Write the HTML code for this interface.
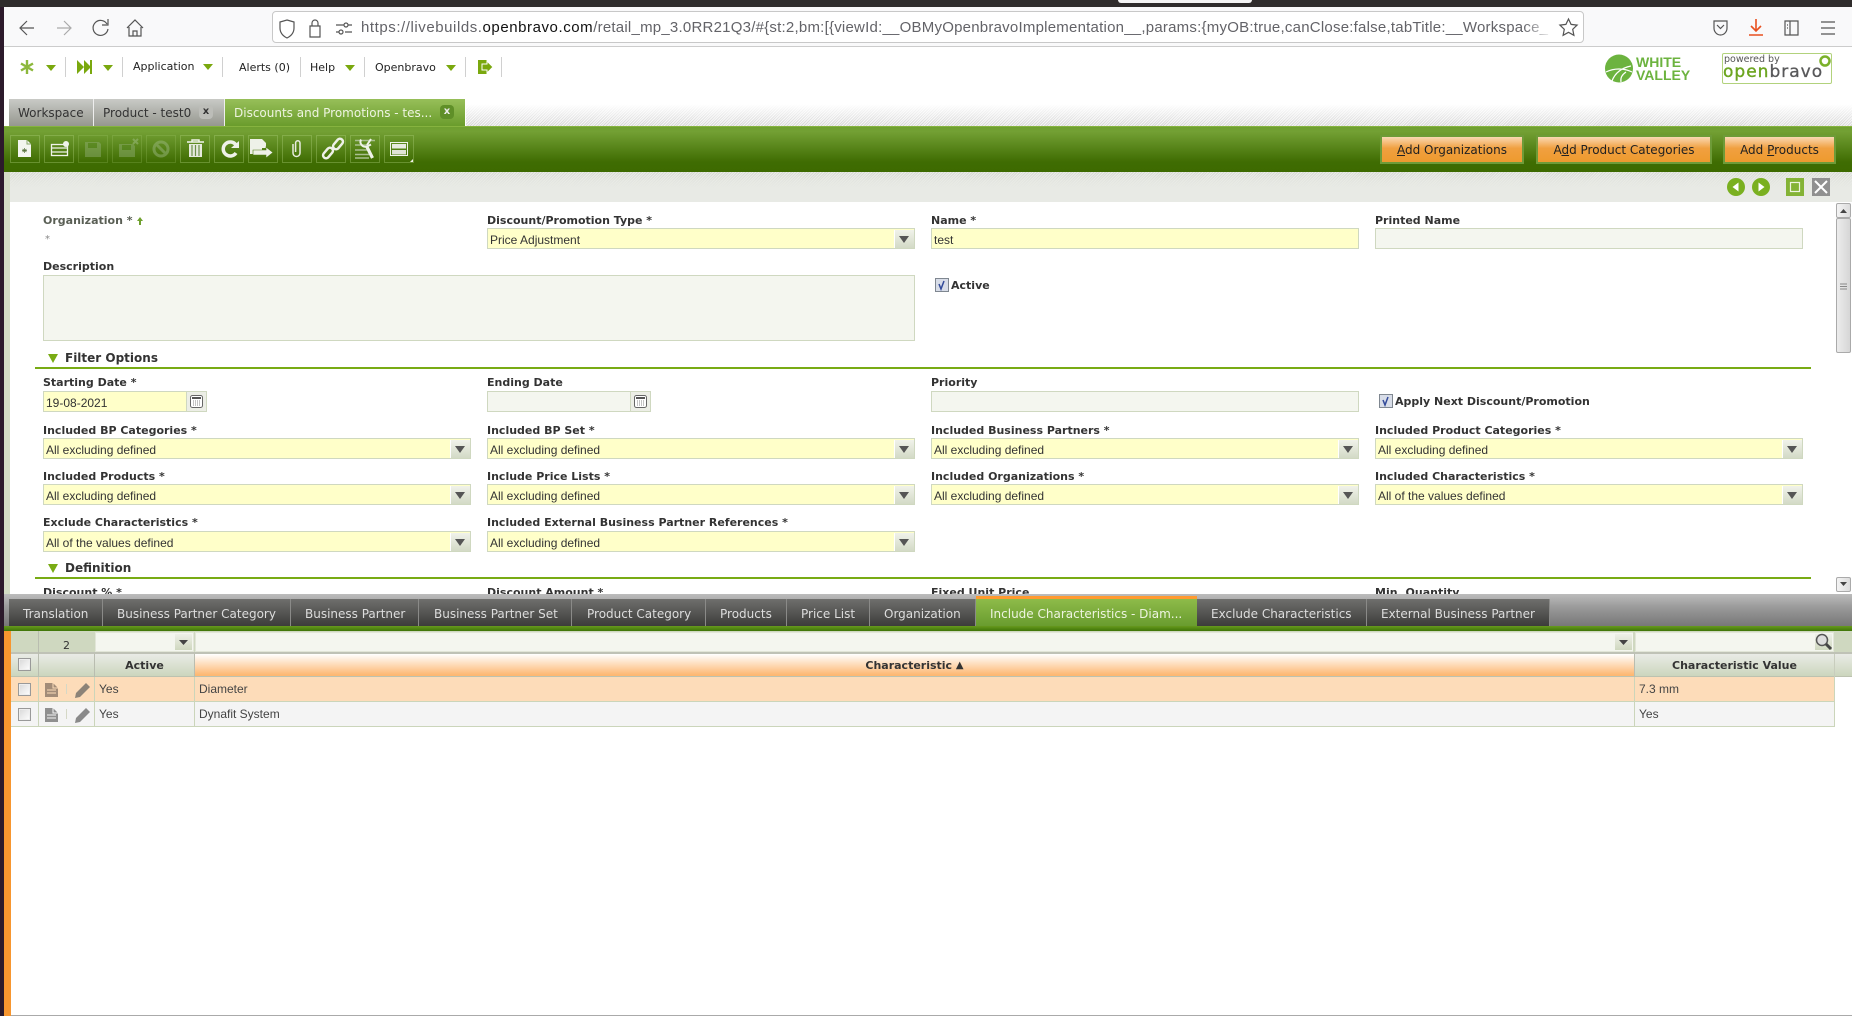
<!DOCTYPE html>
<html><head><meta charset="utf-8"><title>Openbravo</title>
<style>
html,body{margin:0;padding:0;background:#fff;width:1852px;height:1016px;overflow:hidden}
body{position:relative;font-family:"DejaVu Sans",sans-serif;color:#333}
div,span.a{position:absolute;box-sizing:border-box}
.t{white-space:nowrap}
.m{font:11px/14px "DejaVu Sans",sans-serif;color:#222;top:61px;white-space:nowrap}
.sep{top:57px;width:1px;height:20px;background:#d0d0d0}
.l{font:bold 11px/14px "DejaVu Sans",sans-serif;color:#333;white-space:nowrap;margin-top:1px}
.i{border:1px solid #cfd8c0;height:21px;font:12px/21px "Liberation Sans",sans-serif;color:#333;padding:1px 0 0 2px;white-space:nowrap}
.y{background:#ffffc9}.g{background:#f4f6ef}
.sb{right:0;top:1px;width:20px;height:18px;background:linear-gradient(#f0f2ea,#d3dac6);border-left:1px solid #fff}
.sb:after{content:"";position:absolute;left:4px;top:6px;border-left:5px solid transparent;border-right:5px solid transparent;border-top:7px solid #555}
.tt{top:99px;height:27px;font:12px/29px "DejaVu Sans",sans-serif;white-space:nowrap;background:linear-gradient(#c9cac6,#95978f);color:#333;border-right:1px solid #eee}
.st{top:599px;height:27px;font:12px/31px "DejaVu Sans",sans-serif;color:#ddd;white-space:nowrap;background:linear-gradient(#6f6f6d,#3c3c3a);border-right:1px solid #8a8a88}
.tb{top:135px;width:30px;height:28px;border:1px solid rgba(170,205,120,.38)}
.ob{top:135px;height:29px;border:2px solid #6e9b38;background:linear-gradient(#fbd9b3,#f0a040 45%,#ee9a2e);font:12px/27px "DejaVu Sans",sans-serif;color:#222;text-align:center;white-space:nowrap}
.c{font:12px/24px "Liberation Sans",sans-serif;color:#444;white-space:nowrap}
.h{font:bold 11px/24px "DejaVu Sans",sans-serif;color:#333;text-align:center;white-space:nowrap;top:654px;height:22px}
.cb{width:13px;height:13px;border:1px solid #999;background:linear-gradient(135deg,#d8d8d8,#fff);box-shadow:inset 0 0 0 1px #eee}
u{text-decoration:underline}
</style></head><body>
<!-- window chrome -->
<div style="left:0;top:0;width:1852px;height:7px;background:#2f2c2c"></div>
<div style="left:1118px;top:0;width:134px;height:3px;background:#f4f4f4;border-radius:0 0 3px 3px"></div>
<div style="left:4px;top:7px;width:1848px;height:40px;background:#f9f9fa;border-bottom:1px solid #ccc"></div>
<div style="left:272px;top:11px;width:1312px;height:32px;background:#fff;border:1px solid #c8c8c8;border-radius:4px"></div>
<div class="t" style="left:361px;top:18px;width:1192px;height:20px;overflow:hidden;font:15px/20px 'Liberation Sans',sans-serif;color:#636368;letter-spacing:.56px;-webkit-mask-image:linear-gradient(90deg,#000 97.500%,transparent)">https://livebuilds.<span style="color:#111">openbravo.com</span><span style="letter-spacing:.228px">/retail_mp_3.0RR21Q3/#{st:2,bm:[{viewId:__OBMyOpenbravoImplementation__,params:{myOB:true,canClose:false,tabTitle:__Workspace_</span></div>

<!-- app menu -->
<div class="m" style="left:133px;top:60px">Application</div>
<div class="m" style="left:239px">Alerts (0)</div>
<div class="m" style="left:310px">Help</div>
<div class="m" style="left:375px">Openbravo</div>
<div class="sep" style="left:65px"></div><div class="sep" style="left:122px"></div><div class="sep" style="left:222px"></div><div class="sep" style="left:300px"></div><div class="sep" style="left:364px"></div><div class="sep" style="left:465px"></div><div class="sep" style="left:501px"></div>

<!-- logos -->
<div class="t" style="left:1636px;top:54px;font:bold 14px/17px 'Liberation Sans',sans-serif;color:#6cb33f;">WHITE</div>
<div class="t" style="left:1636px;top:67px;font:bold 14px/17px 'Liberation Sans',sans-serif;color:#6cb33f;">VALLEY</div>
<div style="left:1722px;top:53px;width:110px;height:31px;border:1px solid #b2d27c;border-radius:2px;background:#fff"></div>
<div class="t" style="left:1724px;top:54px;font:9.5px/12px 'DejaVu Sans',sans-serif;color:#555">powered by</div>
<div class="t" style="left:1723px;top:60px;font:17px/24px 'DejaVu Sans',sans-serif;color:#6ca520;letter-spacing:1px;-webkit-text-stroke:.4px #6ca520">open<span style="color:#58585a;-webkit-text-stroke:.3px #58585a">bravo</span></div>

<!-- main tabs -->
<div style="left:466px;top:104px;width:1386px;height:22px;background:repeating-linear-gradient(135deg,#d6d6d6 0 1px,#f4f4f4 1px 2px);-webkit-mask-image:linear-gradient(transparent,#000)"></div>
<div class="tt" style="left:9px;width:85px;padding-left:9px">Workspace</div>
<div class="tt" style="left:94px;width:131px;padding-left:9px">Product - test0</div>
<div class="tt" style="left:225px;width:240px;padding-left:9px;background:linear-gradient(#97bf59,#6a9c2c);color:#eef4e0;border:0">Discounts and Promotions - tes...</div>
<div style="left:199px;top:105px;width:14px;height:14px;border-radius:4px;background:#bcbdb8;font:bold 10px/13px 'DejaVu Sans',sans-serif;color:#333;text-align:center">x</div>
<div style="left:440px;top:105px;width:14px;height:14px;border-radius:4px;background:#5f8f28;font:bold 10px/13px 'DejaVu Sans',sans-serif;color:#eee;text-align:center">x</div>

<!-- toolbar -->
<div style="left:4px;top:126px;width:1848px;height:46px;background:linear-gradient(#6e9f30 0,#73a034 10%,#3f6c02 78%,#3d6a00);border-top:1px solid #86b33f"></div>
<div class="tb" style="left:10px"></div><div class="tb" style="left:44px"></div><div class="tb" style="left:78px;opacity:.6"></div><div class="tb" style="left:112px;opacity:.6"></div><div class="tb" style="left:146px;opacity:.6"></div><div class="tb" style="left:180px"></div><div class="tb" style="left:214px"></div><div class="tb" style="left:248px"></div><div class="tb" style="left:282px"></div><div class="tb" style="left:316px"></div><div class="tb" style="left:350px"></div><div class="tb" style="left:384px"></div>
<div class="ob" style="left:1380px;width:144px"><u>A</u>dd Organizations</div>
<div class="ob" style="left:1536px;width:176px">A<u>d</u>d Product Categories</div>
<div class="ob" style="left:1723px;width:113px">Add <u>P</u>roducts</div>

<!-- form area -->
<div style="left:4px;top:172px;width:6px;height:422px;background:#d3dcc4"></div>
<div style="left:10px;top:172px;width:1842px;height:30px;background:linear-gradient(rgba(232,234,229,0),#e8eae5 60%),repeating-linear-gradient(135deg,#d2d4ce 0 1px,#eceee9 1px 2px)"></div>
<div style="left:10px;top:172px;width:1842px;height:30px;background:linear-gradient(rgba(232,234,229,.1),#e8eae5 70%)"></div>

<div class="l" style="left:43px;top:213px;color:#5a5f55">Organization *</div>
<div class="t" style="left:45px;top:233px;font:10px/14px 'DejaVu Sans',sans-serif;color:#888">*</div>
<div class="l" style="left:487px;top:213px">Discount/Promotion Type *</div>
<div class="i y" style="left:487px;top:228px;width:428px">Price Adjustment<div class="sb"></div></div>
<div class="l" style="left:931px;top:213px">Name *</div>
<div class="i y" style="left:931px;top:228px;width:428px">test</div>
<div class="l" style="left:1375px;top:213px">Printed Name</div>
<div class="i g" style="left:1375px;top:228px;width:428px"></div>
<div class="l" style="left:43px;top:259px">Description</div>
<div class="i g" style="left:43px;top:275px;width:872px;height:66px"></div>
<div class="l" style="left:951px;top:278px">Active</div>
<div class="l" style="left:65px;top:349px;font-size:12px;line-height:16px">Filter Options</div>
<div style="left:35px;top:367px;width:1776px;height:2px;background:#78ab14"></div>

<div class="l" style="left:43px;top:375px">Starting Date *</div>
<div class="i y" style="left:43px;top:391px;width:144px">19-08-2021</div>
<div class="i" style="left:186px;top:391px;width:21px;background:#eceee6"></div>
<div class="l" style="left:487px;top:375px">Ending Date</div>
<div class="i g" style="left:487px;top:391px;width:144px"></div>
<div class="i" style="left:630px;top:391px;width:21px;background:#eceee6"></div>
<div class="l" style="left:931px;top:375px">Priority</div>
<div class="i g" style="left:931px;top:391px;width:428px"></div>
<div class="l" style="left:1395px;top:394px">Apply Next Discount/Promotion</div>

<div class="l" style="left:43px;top:423px">Included BP Categories *</div>
<div class="i y" style="left:43px;top:438px;width:428px">All excluding defined<div class="sb"></div></div>
<div class="l" style="left:487px;top:423px">Included BP Set *</div>
<div class="i y" style="left:487px;top:438px;width:428px">All excluding defined<div class="sb"></div></div>
<div class="l" style="left:931px;top:423px">Included Business Partners *</div>
<div class="i y" style="left:931px;top:438px;width:428px">All excluding defined<div class="sb"></div></div>
<div class="l" style="left:1375px;top:423px">Included Product Categories *</div>
<div class="i y" style="left:1375px;top:438px;width:428px">All excluding defined<div class="sb"></div></div>

<div class="l" style="left:43px;top:469px">Included Products *</div>
<div class="i y" style="left:43px;top:484px;width:428px">All excluding defined<div class="sb"></div></div>
<div class="l" style="left:487px;top:469px">Include Price Lists *</div>
<div class="i y" style="left:487px;top:484px;width:428px">All excluding defined<div class="sb"></div></div>
<div class="l" style="left:931px;top:469px">Included Organizations *</div>
<div class="i y" style="left:931px;top:484px;width:428px">All excluding defined<div class="sb"></div></div>
<div class="l" style="left:1375px;top:469px">Included Characteristics *</div>
<div class="i y" style="left:1375px;top:484px;width:428px">All of the values defined<div class="sb"></div></div>

<div class="l" style="left:43px;top:515px">Exclude Characteristics *</div>
<div class="i y" style="left:43px;top:530.500px;width:428px">All of the values defined<div class="sb"></div></div>
<div class="l" style="left:487px;top:515px">Included External Business Partner References *</div>
<div class="i y" style="left:487px;top:530.500px;width:428px">All excluding defined<div class="sb"></div></div>
<div class="l" style="left:65px;top:559px;font-size:12px;line-height:16px">Definition</div>
<div style="left:35px;top:577px;width:1776px;height:2px;background:#78ab14"></div>
<div class="l" style="left:43px;top:585px">Discount % *</div>
<div class="l" style="left:487px;top:585px">Discount Amount *</div>
<div class="l" style="left:931px;top:585px">Fixed Unit Price</div>
<div class="l" style="left:1375px;top:585px">Min. Quantity</div>

<!-- scrollbar -->
<div style="left:1836px;top:202px;width:15px;height:392px;background:#fff"></div>
<div style="left:1836px;top:203px;width:15px;height:15px;background:linear-gradient(90deg,#f4f4f4,#dcdcdc);border:1px solid #aaa;border-radius:2px"></div>
<div style="left:1836px;top:218px;width:15px;height:135px;background:linear-gradient(90deg,#ececec,#d6d6d6);border:1px solid #aaa;border-radius:2px"></div>
<div style="left:1836px;top:577px;width:15px;height:15px;background:linear-gradient(90deg,#f4f4f4,#dcdcdc);border:1px solid #aaa;border-radius:2px"></div>

<!-- sub tabs -->
<div style="left:4px;top:594px;width:1848px;height:32px;background:linear-gradient(#bcbcbc,#9b9b9b 40%,#777),repeating-linear-gradient(135deg,#888 0 1px,#aaa 1px 2px)"></div>
<div style="left:0;top:626px;width:1852px;height:5px;background:linear-gradient(#679a1e,#3f7408)"></div>
<div style="left:0;top:626px;width:4px;height:5px;background:#2c1a2b"></div>
<div class="st" style="left:9px;width:94px;padding-left:14px">Translation</div>
<div class="st" style="left:103px;width:188px;padding-left:14px">Business Partner Category</div>
<div class="st" style="left:291px;width:128px;padding-left:14px">Business Partner</div>
<div class="st" style="left:419px;width:153px;padding-left:15px">Business Partner Set</div>
<div class="st" style="left:572px;width:134px;padding-left:15px">Product Category</div>
<div class="st" style="left:706px;width:81px;padding-left:14px">Products</div>
<div class="st" style="left:787px;width:83px;padding-left:14px">Price List</div>
<div class="st" style="left:870px;width:106px;padding-left:14px">Organization</div>
<div class="st" style="left:976px;top:596px;height:30px;width:221px;padding-left:14px;padding-top:3px;background:linear-gradient(#ff9a30 0 3px,#8ebb4a 3px,#699c2f);color:#eef4e0;border:0">Include Characteristics - Diam...</div>
<div class="st" style="left:1197px;width:170px;padding-left:14px">Exclude Characteristics</div>
<div class="st" style="left:1367px;width:183px;padding-left:14px">External Business Partner</div>

<!-- grid -->
<div style="left:4px;top:631px;width:7px;height:385px;background:#f7962f"></div>
<div style="left:11px;top:631px;width:1841px;height:23px;background:#cfd8c0;border-top:1px solid #cfd8c0;border-bottom:2px solid #bfc2b6"></div>
<div style="left:38px;top:631px;width:1px;height:23px;background:#b9bdb0"></div>
<div class="t" style="left:39px;top:636px;width:55px;text-align:center;font:11px/20px 'DejaVu Sans',sans-serif;color:#333">2</div>
<div class="g" style="left:95px;top:632px;width:99px;height:20px;border:1px solid #e2e6d8"></div>
<div style="left:174px;top:633px;width:19px;height:18px;background:linear-gradient(#eef0e8,#cfd8bf);border:1px solid #f4f6ef"></div>
<div class="g" style="left:195px;top:632px;width:1438px;height:20px;border:1px solid #e2e6d8"></div>
<div style="left:1614px;top:633px;width:19px;height:18px;background:linear-gradient(#eef0e8,#cfd8bf);border:1px solid #f4f6ef"></div>
<div class="g" style="left:1635px;top:632px;width:199px;height:20px;border:1px solid #e2e6d8"></div>
<div style="left:1814px;top:633px;width:19px;height:18px;background:linear-gradient(#eef0e8,#cfd8bf);border:1px solid #f4f6ef"></div>

<div style="left:11px;top:654px;width:1841px;height:23px;background:linear-gradient(#e9ebe6,#ccd6bd);border-bottom:1px solid #bcc2b0"></div>
<div style="left:195px;top:654px;width:1439px;height:22px;background:linear-gradient(#fff,#fdb873 95%)"></div>
<div style="left:38px;top:654px;width:1px;height:23px;background:#b9bdb0"></div>
<div style="left:94px;top:654px;width:1px;height:23px;background:#b9bdb0"></div>
<div style="left:194px;top:654px;width:1px;height:23px;background:#b9bdb0"></div>
<div style="left:1634px;top:654px;width:1px;height:23px;background:#b9bdb0"></div>
<div style="left:1834px;top:654px;width:1px;height:23px;background:#c8cdbd"></div>
<div class="h" style="left:95px;width:99px">Active</div>
<div class="h" style="left:195px;width:1439px">Characteristic <span style="font-size:10px;vertical-align:1px">▲</span></div>
<div class="h" style="left:1635px;width:199px">Characteristic Value</div>
<div class="cb" style="left:18px;top:658px"></div>

<div style="left:11px;top:677px;width:1824px;height:25px;background:#fddcb9;border-bottom:1px solid #cbd5ba"></div>
<div style="left:11px;top:702px;width:1824px;height:25px;background:#f4f4f4;border-bottom:1px solid #cbd5ba"></div>
<div style="left:38px;top:677px;width:1px;height:50px;background:#cbd5ba"></div>
<div style="left:94px;top:677px;width:1px;height:50px;background:#cbd5ba"></div>
<div style="left:194px;top:677px;width:1px;height:50px;background:#cbd5ba"></div>
<div style="left:1634px;top:677px;width:1px;height:50px;background:#cbd5ba"></div>
<div style="left:1834px;top:677px;width:1px;height:50px;background:#cbd5ba"></div>
<div style="left:66px;top:684px;width:1px;height:10px;background:#d5d8c6"></div>
<div style="left:66px;top:709px;width:1px;height:10px;background:#d5d8c6"></div>
<div class="cb" style="left:18px;top:683px"></div><div class="cb" style="left:18px;top:708px"></div>
<div class="c" style="left:99px;top:677px">Yes</div><div class="c" style="left:199px;top:677px">Diameter</div><div class="c" style="left:1639px;top:677px">7.3 mm</div>
<div class="c" style="left:99px;top:702px">Yes</div><div class="c" style="left:199px;top:702px">Dynafit System</div><div class="c" style="left:1639px;top:702px">Yes</div>

<div style="left:11px;top:1015px;width:1841px;height:1px;background:#aaa"></div>
<div style="left:0;top:7px;width:4px;height:1009px;background:#2c1a2b"></div>

<!-- icons overlay -->
<svg width="1852" height="1016" viewBox="0 0 1852 1016" style="position:absolute;left:0;top:0" fill="none">
<!-- browser nav -->
<g stroke="#555" stroke-width="1.200" fill="none">
<path d="M34 28H21M27 21l-7 7 7 7"/>
<path d="M57 28h13M64 21l7 7-7 7" stroke="#aaa"/>
<path d="M107 24a7.500 7.500 0 1 0 1 5M108 19v6h-6"/>
<path d="M127 28l8-8 8 8M129 27v9h12v-9M133 36v-5h4v5"/>
<path d="M287 20l7 2v6c0 5-3 8-7 10-4-2-7-5-7-10v-6z"/>
<path d="M310 26h10v11h-10zM312 26v-3a3 3 0 0 1 6 0v3"/>
<path d="M336 25h8M336 32h3M345 32h7M348 25h4"/><circle cx="346" cy="25" r="2"/><circle cx="341" cy="32" r="2"/>
<path d="M1568.500 19l2.600 5.400 6 .7-4.400 4.200 1.200 6-5.400-3-5.400 3 1.200-6-4.400-4.200 6-.7z"/>
<path d="M1714 21h13v7c0 4-3 7-6.500 7s-6.500-3-6.500-7zM1717 25l3.500 3.500 3.500-3.500"/>
<path d="M1785 21h13v14h-13zM1790 21v14M1787 25h1M1787 28h1"/>
<path d="M1821 22h14M1821 28h14M1821 34h14"/>
</g>
<path d="M1756 19v12M1751 26l5 5 5-5M1749 35h14" stroke="#e8501f" stroke-width="1.600"/>
<!-- app menu icons -->
<path d="M27 60v14M21 63.500l12 7M33 63.500l-12 7" stroke="#8cb83c" stroke-width="2.400"/>
<path d="M46 65h10l-5 6zM103 65h10l-5 6zM203 64h10l-5 6zM345 65h10l-5 6zM446 65h10l-5 6z" fill="#7aa80e"/>
<path d="M77 60l7 7-7 7zM84 60l7 7-7 7z" fill="#7aa80e"/><rect x="90" y="60" width="2" height="14" fill="#7aa80e"/>
<path d="M478 60h9v14h-9z" fill="#7aa80e"/><path d="M482 64h5v-3l6 6-6 6v-3h-5z" fill="#7aa80e" stroke="#fff"/>
<!-- white valley globe -->
<circle cx="1619" cy="68.500" r="14" fill="#6cb33f"/>
<path d="M1606 72c8-4 18-4 26 0M1612 81c3-8 9-13 19-15M1621 82c-1-5 2-8 5-10" stroke="#fff" stroke-width="1.200"/>
<circle cx="1825" cy="61" r="4.500" stroke="#7bb12a" stroke-width="2.500"/>
<!-- tab toolbar icons -->
<path d="M18 140h9l4 4v13H18z" fill="#f3f5ef"/><path d="M27 140v4h4" stroke="#8aa86a"/><path d="M24.500 148v5M22 150.500h5M22.500 149l4 3M26.500 149l-4 3" stroke="#55703a" stroke-width=".7"/>
<g stroke="#f0f3ea" stroke-width="1.300"><rect x="51.500" y="144.500" width="16" height="11"/><path d="M52 148h16M52 152h16"/></g><circle cx="66" cy="144" r="3" fill="#f0f3ea"/>
<g opacity=".45"><path d="M85 142h14l2 2v13H85z" fill="#92b078"/><rect x="88" y="143" width="9" height="5" fill="#5a8a28"/></g>
<g opacity=".45"><path d="M119 144h14l2 2v11h-16z" fill="#92b078"/><rect x="122" y="145" width="9" height="5" fill="#5a8a28"/><path d="M133 139l5 5M138 139l-5 5" stroke="#a8c490" stroke-width="2"/></g>
<g opacity=".45"><circle cx="161" cy="149" r="7" stroke="#a0bc88" stroke-width="3"/><path d="M156 144l10 10" stroke="#a0bc88" stroke-width="3"/></g>
<path d="M187 142h17M192 142v-2h7v2" stroke="#f0f3ea" stroke-width="1.500"/><path d="M189 144h13v13h-13z" fill="#e6eade"/><path d="M192 145v11M195.500 145v11M199 145v11" stroke="#6b8f48" stroke-width="1.200"/>
<path d="M236 145a7 7 0 1 0 0 8" stroke="#eef1e8" stroke-width="3.500"/><path d="M231 148h8v-7z" fill="#eef1e8"/>
<path d="M253 139h9l4 4v5h-4v6h-12v-15z" fill="#eef1e8"/><path d="M253 150h13v-3l7 5.500-7 5.500v-3h-13z" fill="#eef1e8" stroke="#4c7b12" stroke-width=".6"/>
<path d="M293 144v9a3.500 3.500 0 0 0 7 0v-10a2.200 2.200 0 0 0-4.400 0v9" stroke="#e8ecdf" stroke-width="1.500"/>
<g stroke="#eef1e8" stroke-width="2.500" fill="none"><rect x="-6" y="-3" width="12" height="6" rx="3" transform="translate(328 153) rotate(-50)"/><rect x="-6" y="-3" width="12" height="6" rx="3" transform="translate(338 144) rotate(-50)"/></g>
<g stroke="#a9bf90" stroke-width="1.500"><path d="M355 140.500h20M355 145h12M355 150h12M355 154.500h14M355 158h14"/></g><path d="M366.500 146l6 12" stroke="#f0f3ea" stroke-width="3.200"/><path d="M361 139.500a5 5 0 0 0 6 7l4-2M371 139l-4 6" stroke="#f0f3ea" stroke-width="2"/>
<rect x="390.500" y="142.500" width="17" height="13" stroke="#f0f3ea"/><rect x="392" y="144" width="14" height="4.500" fill="#e8ebe0"/><rect x="392" y="150" width="14" height="4.500" fill="#dfe3d6"/><path d="M413 159v3h-3z" fill="#eef1e8"/>
<!-- pager -->
<circle cx="1736" cy="187" r="9" fill="#7ab020"/><path d="M1738.500 182.500v9l-6-4.500z" fill="#fff"/>
<circle cx="1761" cy="187" r="9" fill="#7ab020"/><path d="M1758.500 182.500v9l6-4.500z" fill="#fff"/>
<rect x="1786" y="178" width="18" height="18" fill="#84b336"/><rect x="1790.500" y="182.500" width="9" height="9" stroke="#eef4e0" stroke-width="1.200"/>
<rect x="1812" y="178" width="18" height="18" fill="#909090"/><path d="M1815 181l12 12M1827 181l-12 12" stroke="#fff" stroke-width="2"/>
<!-- scroll -->
<path d="M1840 213l3.500-4 3.500 4z" fill="#444"/><path d="M1840 582l3.500 4 3.500-4z" fill="#444"/><path d="M1840 284h7M1840 286.500h7M1840 289h7" stroke="#888"/>
<!-- misc form icons -->
<path d="M140 217l3 4h-2v4h-2v-4h-2z" fill="#6fa02e"/>
<path d="M48 354h10l-5 9zM48 564h10l-5 9z" fill="#79ab14"/>
<rect x="935.500" y="278.500" width="13" height="13" fill="#d8dde8" stroke="#7f8790"/><path d="M939 284l2 5 3-8" stroke="#324a9a" stroke-width="1.500"/>
<rect x="1379.500" y="394.500" width="13" height="13" fill="#d8dde8" stroke="#7f8790"/><path d="M1383 400l2 5 3-8" stroke="#324a9a" stroke-width="1.500"/>
<g stroke="#666"><rect x="190.500" y="395.500" width="12" height="12" rx="2" fill="#fff"/><rect x="634.500" y="395.500" width="12" height="12" rx="2" fill="#fff"/></g>
<path d="M192 398h9M636 398h9" stroke="#555" stroke-width="2"/><path d="M193 401h7M193 403h7M193 405h7M637 401h7M637 403h7M637 405h7" stroke="#888" stroke-dasharray="1 1"/>
<!-- grid -->
<path d="M179 640h9l-4.500 5zM1619 640h9l-4.500 5z" fill="#444"/>
<circle cx="1822" cy="640" r="5.500" fill="#ddd" stroke="#555" stroke-width="1.500"/><path d="M1826 644l5 5" stroke="#444" stroke-width="3"/>
<path d="M45 683h8l5 5v9H45z" fill="#a38c78"/><path d="M47 690h9M47 693h9" stroke="#fddcb9"/><path d="M53 683v5h5" stroke="#fddcb9"/>
<path d="M45 708h8l5 5v9H45z" fill="#8f8f8f"/><path d="M47 715h9M47 718h9" stroke="#f4f4f4"/><path d="M53 708v5h5" stroke="#f4f4f4"/>
<path d="M86 683l4 4-10 10-5 1 1-5z" fill="#8c8378"/><path d="M86 708l4 4-10 10-5 1 1-5z" fill="#8a8a8a"/>
</svg>
</body></html>
